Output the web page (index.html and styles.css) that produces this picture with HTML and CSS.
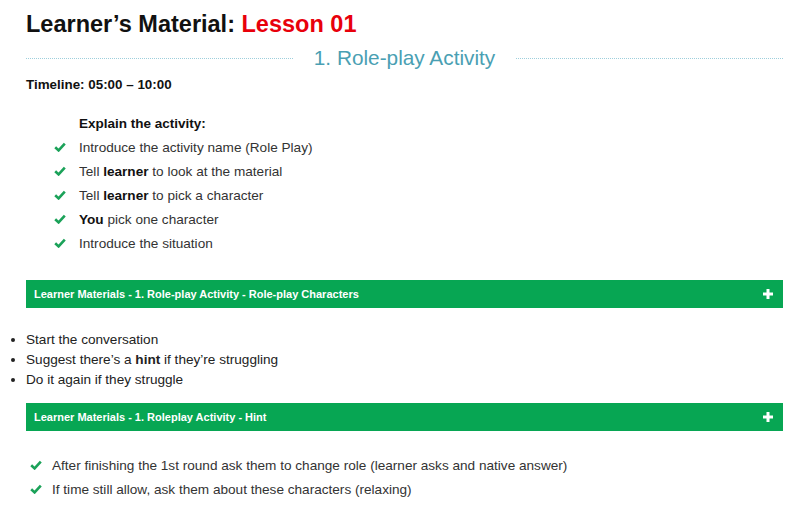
FILE: index.html
```html
<!DOCTYPE html>
<html lang="en">
<head>
  <meta charset="UTF-8" />
  <meta name="viewport" content="width=device-width, initial-scale=1.0"/>
  <title>Learner's Material: Lesson 01</title>
  <link rel="stylesheet" href="styles.css">
</head>
<body>
  <div class="page">
    <h1>Learner’s Material: <span class="lesson">Lesson 01</span></h1>

    <div class="divider">
      <span class="line"></span>
      <h2>1. Role-play Activity</h2>
      <span class="line"></span>
    </div>

    <p class="timeline">Timeline: 05:00 – 10:00</p>

    <div class="explain">
      <p class="explain-title">Explain the activity:</p>
      <ul class="checks">
        <li><svg class="tick" viewBox="0 0 12 10"><path d="M1.2 5.2 L4.6 8.4 L10.8 1.6" /></svg>Introduce the activity name (Role Play)</li>
        <li><svg class="tick" viewBox="0 0 12 10"><path d="M1.2 5.2 L4.6 8.4 L10.8 1.6" /></svg>Tell <b>learner</b> to look at the material</li>
        <li><svg class="tick" viewBox="0 0 12 10"><path d="M1.2 5.2 L4.6 8.4 L10.8 1.6" /></svg>Tell <b>learner</b> to pick a character</li>
        <li><svg class="tick" viewBox="0 0 12 10"><path d="M1.2 5.2 L4.6 8.4 L10.8 1.6" /></svg><b>You</b> pick one character</li>
        <li><svg class="tick" viewBox="0 0 12 10"><path d="M1.2 5.2 L4.6 8.4 L10.8 1.6" /></svg>Introduce the situation</li>
      </ul>
    </div>

    <div class="toggle">
      <span>Learner Materials - 1. Role-play Activity - Role-play Characters</span>
      <svg class="plus" viewBox="0 0 12 12"><path d="M6 1 V11 M1 6 H11" /></svg>
    </div>

    <ul class="bullets">
      <li>Start the conversation</li>
      <li>Suggest there’s a <b>hint</b> if they’re struggling</li>
      <li>Do it again if they struggle</li>
    </ul>

    <div class="toggle">
      <span>Learner Materials - 1. Roleplay Activity - Hint</span>
      <svg class="plus" viewBox="0 0 12 12"><path d="M6 1 V11 M1 6 H11" /></svg>
    </div>

    <ul class="checks after">
      <li><svg class="tick" viewBox="0 0 12 10"><path d="M1.2 5.2 L4.6 8.4 L10.8 1.6" /></svg>After finishing the 1st round ask them to change role (learner asks and native answer)</li>
      <li><svg class="tick" viewBox="0 0 12 10"><path d="M1.2 5.2 L4.6 8.4 L10.8 1.6" /></svg>If time still allow, ask them about these characters (relaxing)</li>
    </ul>
  </div>
</body>
</html>
```

FILE: styles.css
```css
body { margin: 0; font-family: "Liberation Sans", Arial, sans-serif; color: #333; background: #fff; }
.page { width: 757px; padding: 10px 0 0 26px; }
h1 { margin: 0; font-size: 23.5px; line-height: 28px; color: #111; font-weight: bold; }
.lesson { color: #e8000b; }

.divider { display: flex; align-items: center; gap: 21px; margin-top: 4px; height: 32px; }
.divider .line { flex: 1; border-top: 1px dotted #9ecfdc; }
.divider h2 { margin: 0; font-size: 20.8px; font-weight: normal; color: #4a9fb3; line-height: 32px; }

.timeline { margin: 1px 0 0; font-size: 13.4px; font-weight: bold; color: #111; line-height: 20px; }

.explain { padding-left: 28px; margin-top: 19px; }
.explain-title { margin: 0 0 2px 25px; font-size: 13.5px; font-weight: bold; color: #111; line-height: 20px; }

.checks { list-style: none; margin: 0; padding: 0; font-size: 13.6px; line-height: 24px; }
.checks b { color: #111; }
.tick { display: inline-block; vertical-align: middle; width: 12px; height: 10px; margin: -2px 13px 0 0; }
.tick path { fill: none; stroke: #1ba259; stroke-width: 2.6; stroke-linejoin: miter; }

.toggle { display: flex; justify-content: space-between; align-items: center; height: 28px; padding: 0 9px 0 8px; background: #07a653; color: #fff; font-size: 11px; font-weight: bold; }
.explain + .toggle { margin-top: 24px; }
.plus { width: 12px; height: 12px; }
.plus path { stroke: #fff; stroke-width: 3; }

.bullets { margin: 22px 0 0; padding: 0; list-style: disc outside; font-size: 13.6px; line-height: 20px; color: #222; }
.bullets + .toggle { margin-top: 13px; }

.checks.after { padding-left: 4px; margin-top: 23px; }
.checks.after .tick { margin-right: 10px; }
```
